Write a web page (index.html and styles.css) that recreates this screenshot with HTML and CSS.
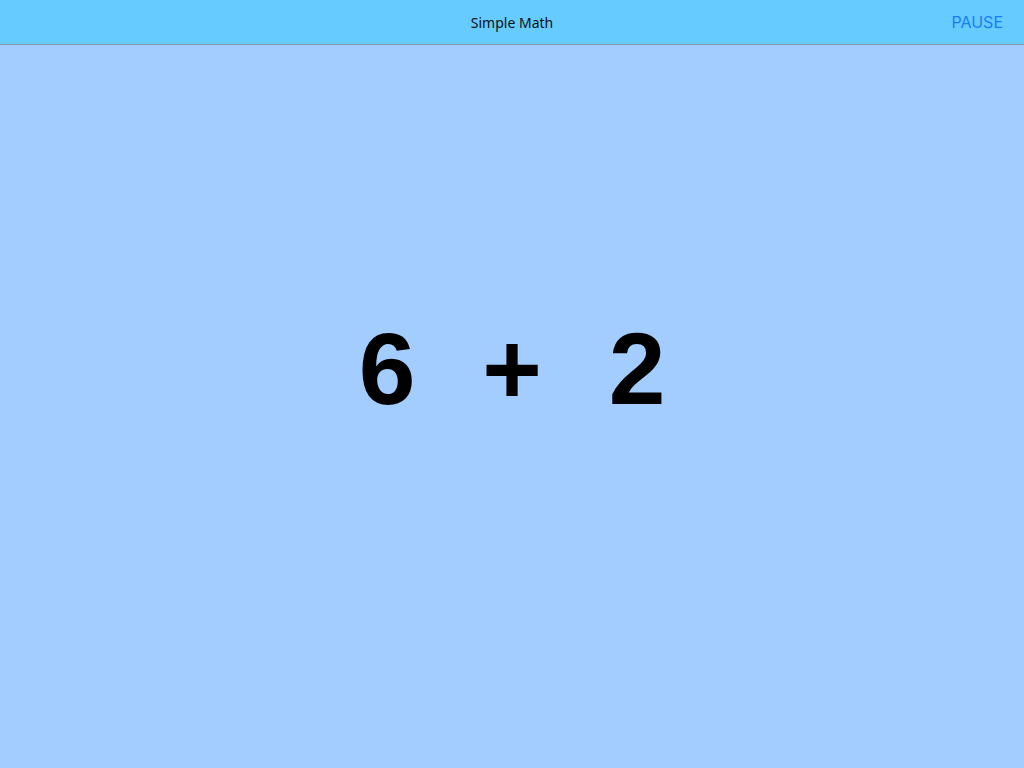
FILE: index.html
```html
<!DOCTYPE html>
<html>
<head>
<meta charset="utf-8">
<link rel="stylesheet" href="styles.css">
</head>
<body>
<div class="app">
  <header class="navbar">
    <div class="nav-side"></div>
    <div class="nav-title">Simple Math</div>
    <div class="nav-side nav-right"><span class="pause">PAUSE</span></div>
  </header>
  <main class="stage">
    <div class="equation">
      <span class="cell">6</span>
      <span class="cell">+</span>
      <span class="cell">2</span>
    </div>
  </main>
</div>
</body>
</html>
```
FILE: styles.css
```css
html, body {
  margin: 0;
  padding: 0;
  height: 100%;
}
body {
  font-family: "Noto Sans", "Liberation Sans", sans-serif;
  background: #a3cdff;
}
.app {
  display: flex;
  flex-direction: column;
  height: 100%;
}
.navbar {
  height: 45px;
  box-sizing: border-box;
  background: #66ccff;
  border-bottom: 1px solid #8a98ae;
  display: grid;
  grid-template-columns: 1fr auto 1fr;
  align-items: center;
}
.nav-right {
  display: flex;
  justify-content: flex-end;
  padding-right: 21px;
}
.nav-title {
  font-size: 14px;
  color: #111;
}
.pause {
  font-family: "Inter", "Liberation Sans", sans-serif;
  font-size: 16px;
  color: #1a7cf5;
}
.stage {
  flex: 1;
  background: #a3cdff;
  padding-top: 273px;
}
.equation {
  display: flex;
  justify-content: center;
}
.cell {
  width: 125px;
  text-align: center;
  font-family: "Liberation Sans", Arial, sans-serif;
  font-weight: bold;
  font-size: 102px;
  line-height: 102px;
  color: #000;
}
```
